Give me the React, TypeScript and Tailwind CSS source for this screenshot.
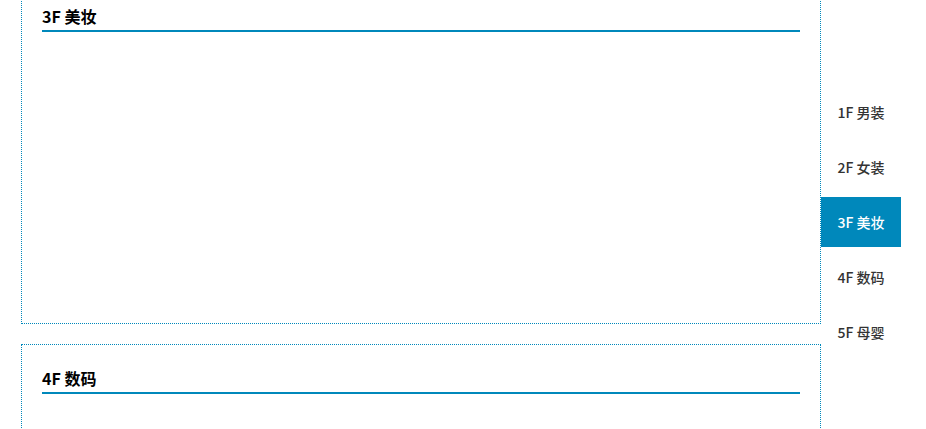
import { useState } from 'react'

type Floor = {
  id: string
  label: string
}

const floors: Floor[] = [
  { id: '1f', label: '1F 男装' },
  { id: '2f', label: '2F 女装' },
  { id: '3f', label: '3F 美妆' },
  { id: '4f', label: '4F 数码' },
  { id: '5f', label: '5F 母婴' },
]

const font = "font-['Noto_Sans_CJK_SC','Noto_Sans',sans-serif]"

function FloorBox({ label }: { label: string }) {
  return (
    <section className="box-border h-[342px] w-[800px] shrink-0 border border-dotted border-[#0088bb] px-[20px] pt-[20px]">
      <h3 className="border-b-2 border-[#0088bb] text-[16px] font-bold leading-[27px] text-black">
        {label}
      </h3>
    </section>
  )
}

export default function App() {
  const [active, setActive] = useState('3f')

  return (
    <div className={`flex h-[429px] w-[926px] items-start overflow-hidden bg-white ${font}`}>
      <div className="ml-[21px] mt-[-18px] flex shrink-0 flex-col gap-[20px]">
        <FloorBox label="3F 美妆" />
        <FloorBox label="4F 数码" />
      </div>

      <ul className="mt-[87px] flex w-[80px] shrink-0 flex-col gap-[5px]">
        {floors.map((floor) => (
          <li key={floor.id}>
            <button
              type="button"
              onClick={() => setActive(floor.id)}
              className={`flex h-[50px] w-[80px] items-center justify-center text-[14px] font-medium ${
                active === floor.id ? 'bg-[#0088bb] text-white' : 'text-[#333]'
              }`}
            >
              {floor.label}
            </button>
          </li>
        ))}
      </ul>
    </div>
  )
}
